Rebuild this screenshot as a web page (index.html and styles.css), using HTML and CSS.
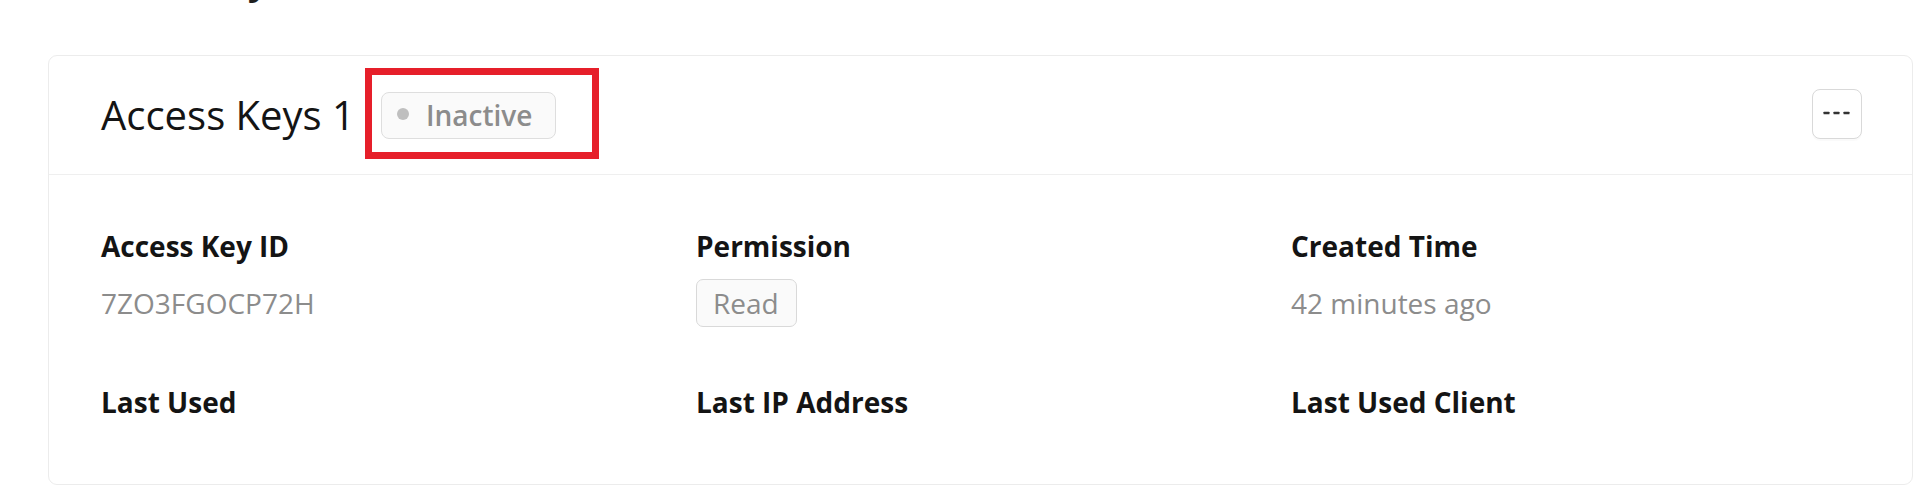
FILE: index.html
```html
<!DOCTYPE html>
<html lang="en">
<head>
<meta charset="utf-8">
<title>Access Keys</title>
<link rel="stylesheet" href="styles.css">
</head>
<body>
<h1 class="page-title">Access Keys</h1>
<section class="card">
  <header class="card-head">
    <div class="head-left">
      <h2 class="card-title">Access Keys 1</h2>
      <div class="status-wrap">
        <span class="status-tag"><span class="status-dot"></span><span class="status-text">Inactive</span></span>
        <span class="highlight"></span>
      </div>
    </div>
    <button class="more-btn" type="button" aria-label="More">
      <svg width="28" height="4" viewBox="0 0 28 4" aria-hidden="true">
        <rect x="0.5" y="0.7" width="6" height="2.6" rx="0.6" fill="#333333"/>
        <rect x="10.5" y="0.7" width="6" height="2.6" rx="0.6" fill="#333333"/>
        <rect x="20.5" y="0.7" width="6" height="2.6" rx="0.6" fill="#333333"/>
      </svg>
    </button>
  </header>
  <div class="card-body">
    <div class="item">
      <div class="label">Access Key ID</div>
      <div class="value">7ZO3FGOCP72H</div>
    </div>
    <div class="item">
      <div class="label">Permission</div>
      <div class="value"><span class="perm-tag">Read</span></div>
    </div>
    <div class="item">
      <div class="label">Created Time</div>
      <div class="value">42 minutes ago</div>
    </div>
    <div class="item">
      <div class="label">Last Used</div>
    </div>
    <div class="item">
      <div class="label">Last IP Address</div>
    </div>
    <div class="item">
      <div class="label">Last Used Client</div>
    </div>
  </div>
</section>
</body>
</html>
```
FILE: styles.css
```css
* { box-sizing: border-box; }

html, body {
  margin: 0;
  padding: 0;
  background: #ffffff;
  font-family: "Open Sans", "Noto Sans", "Liberation Sans", sans-serif;
  color: #1f1f1f;
  overflow: hidden;
}

.page-title {
  margin: -50px 0 0 0;
  padding-left: 61px;
  font-size: 40px;
  line-height: 56px;
  font-weight: 600;
  color: #1f1f1f;
}

.card {
  margin: 49px 7px 0 48px;
  border: 1px solid #ececec;
  border-radius: 9px;
  background: #fff;
}

.card-head {
  height: 119px;
  border-bottom: 1px solid #efefef;
  display: flex;
  align-items: center;
  justify-content: space-between;
  padding: 0 50px 0 52px;
}

.head-left {
  display: flex;
  align-items: center;
  gap: 26px;
}

.card-title {
  margin: 0;
  font-size: 40px;
  line-height: 56px;
  font-weight: 400;
  color: #141414;
}

.status-wrap {
  position: relative;
  display: flex;
}

.status-tag {
  display: inline-flex;
  align-items: center;
  height: 47px;
  padding: 0 23px 0 15px;
  background: #fafafa;
  border: 1px solid #dedede;
  border-radius: 8px;
  gap: 17px;
}

.status-dot {
  width: 12px;
  height: 12px;
  border-radius: 50%;
  background: #bfbfbf;
  margin-top: -2px;
}

.status-text {
  font-size: 28px;
  line-height: 40px;
  font-weight: 600;
  color: #8c8c8c;
}

.highlight {
  position: absolute;
  left: -16px;
  top: -24px;
  width: 234px;
  height: 91px;
  border: 7px solid #e61f2a;
  pointer-events: none;
}

.more-btn {
  width: 50px;
  height: 50px;
  margin-top: -2px;
  padding: 0;
  display: flex;
  align-items: center;
  justify-content: center;
  background: #fff;
  border: 1px solid #d9d9d9;
  border-radius: 8px;
  box-shadow: 0 2px 0 rgba(0, 0, 0, 0.02);
}

.more-btn svg {
  margin-top: -2px;
}

.card-body {
  padding: 51px 50px 62px 52px;
  display: grid;
  grid-template-columns: repeat(3, 1fr);
  column-gap: 24px;
  row-gap: 55px;
}

.label {
  font-size: 28px;
  line-height: 40px;
  font-weight: 700;
  color: #141414;
}

.value {
  margin-top: 13px;
  height: 48px;
  font-size: 28px;
  line-height: 48px;
  color: #8c8c8c;
  display: flex;
  align-items: center;
}

.perm-tag {
  display: inline-block;
  height: 48px;
  line-height: 46px;
  padding: 0 17px 0 16px;
  font-size: 28px;
  color: #8c8c8c;
  background: #fafafa;
  border: 1px solid #d9d9d9;
  border-radius: 7px;
}
```
